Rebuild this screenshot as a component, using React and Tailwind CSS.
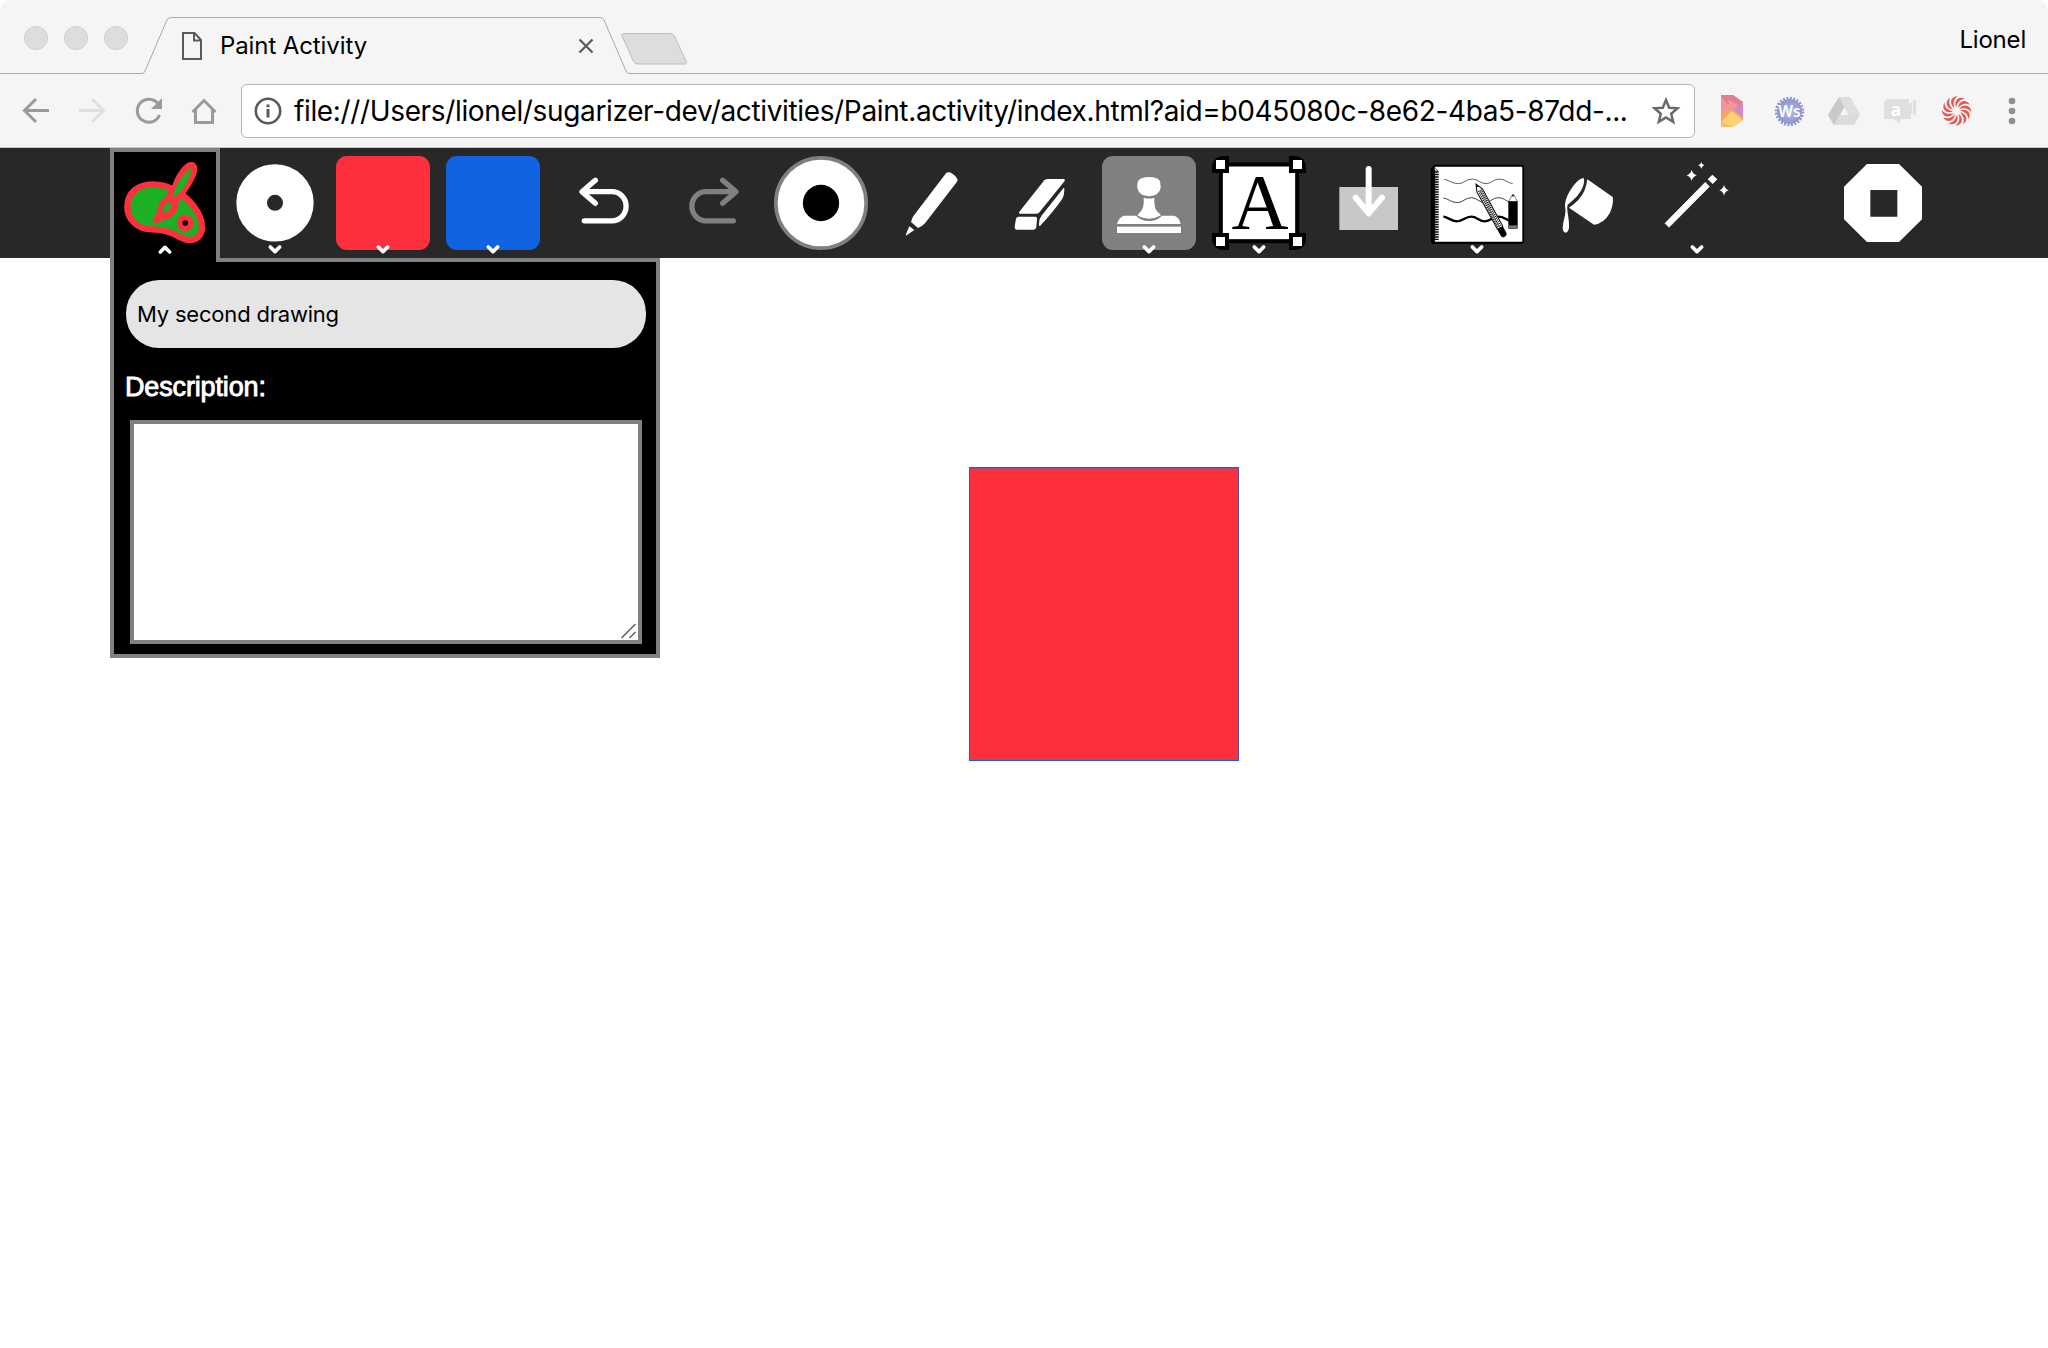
const Caret = ({ cx, up = false }) => (
  <path
    d={up ? `M${cx - 14} 336 L${cx} 322 L${cx + 14} 336` : `M${cx - 14} 321 L${cx} 335 L${cx + 14} 321`}
    fill="none"
    stroke="#fff"
    strokeWidth="11"
    strokeLinecap="round"
    strokeLinejoin="round"
  />
);

/* Tool icons share a 282-unit square; the x origin differs per tool. */
const Tool = ({ x, label, className = "mt-2", children }) => (
  <button type="button" aria-label={label} className={`size-[94px] shrink-0 ${className}`}>
    <svg viewBox={`${x} 48 282 282`} className="block size-full overflow-visible">
      {children}
    </svg>
  </button>
);

const Paint = () => (
  <>
    <path
      d="M82 200 C82 158 116 133 156 133 C184 133 206 140 224 150 C262 170 306 216 306 262 C306 286 290 300 268 300 C240 300 222 268 155 268 C112 268 82 238 82 200 Z"
      fill="#1cb024"
      stroke="#fd313d"
      strokeWidth="19"
    />
    <path
      d="M216 138 C226 108 246 78 262 69 C276 61 292 68 292 86 C292 108 272 138 257 160 L243 178 L236 186 C236 206 228 220 216 230 C202 240 184 240 172 249 C160 252 155 243 160 236 C174 220 170 200 182 184 C190 176 198 174 203 160 Z"
      fill="#fd313d"
    />
    <path d="M219 174 C216 152 248 102 274 83 C276 106 252 148 234 162 Z" fill="#1cb024" />
    <path d="M214 191 C215 206 206 216 186 219 C190 204 194 190 204 187 Z" fill="#1cb024" />
    <circle cx="256" cy="249" r="17" fill="#000" stroke="#fd313d" strokeWidth="17" />
  </>
);

const WAVE = "C112 118 126 131 145 131 C162 131 168 117 187 117 C204 117 210 131 228 131 C245 131 250 117 268 117 C284 117 292 128 308 131";

const Notebook = () => (
  <>
    <path d="M70 78 L62 86 V302 Q62 312 74 312 L336 311" fill="#000" />
    <rect x="71" y="77" width="269" height="231" rx="6" fill="#fff" stroke="#000" strokeWidth="6" />
    <path d="M80 92 V302" stroke="#000" strokeWidth="12" strokeDasharray="3 2" />
    <path d="M74 90 V302" stroke="#000" strokeWidth="3" />
    <path d="M72 82 L84 93" stroke="#000" strokeWidth="2" />
    <path d={`M103 118 ${WAVE}`} fill="none" stroke="#111" strokeWidth="2" />
    <path d="M100 174 C112 174 123 188 142 188 C159 188 165 173 184 173 C201 173 207 188 225 188 C242 188 247 173 265 173 C280 173 288 182 297 186" fill="none" stroke="#111" strokeWidth="2.4" />
    <path d="M100 230 C112 230 123 244 142 244 C159 244 165 230 184 230 C201 230 207 244 225 244 C242 244 247 230 265 230 C280 230 288 238 297 241" fill="none" stroke="#000" strokeWidth="7" />
    <g transform="translate(198 132) rotate(-28.5)">
      <path d="M0 0 L-9 22 L-8 150 H10 L10 22 Z" fill="#fff" stroke="#000" strokeWidth="3" />
      <path d="M0 0 L-4 10 H4 Z" fill="#000" />
      <path d="M-4 22 V148 M5 22 V148" stroke="#000" strokeWidth="5" strokeDasharray="3 3" />
      <path d="M0.5 22 V148" stroke="#000" strokeWidth="2" />
      <path d="M-9 150 H10 V172 Q10 180 0 180 Q-9 180 -9 172 Z" fill="#000" />
    </g>
    <path d="M296 185 L305 167 H313 L322 185 Z" fill="#fff" stroke="#000" strokeWidth="1.5" />
    <path d="M305 169 L309 161 L313 169 Z" fill="#000" />
    <rect x="295" y="184" width="28" height="72" fill="#000" />
    <rect x="296" y="257" width="26" height="8" fill="#777" stroke="#222" strokeWidth="2" />
  </>
);

const Sparkle = ({ x, y, r }) => (
  <path
    transform={`translate(${x} ${y}) scale(${r})`}
    d="M0 -1 Q.15 -.25 .9 0 Q.15 .25 0 1 Q-.15 .25 -.9 0 Q-.15 -.25 0 -1 Z"
    fill="#fff"
  />
);

const TabStrip = () => (
  <div className="flex h-[74px] items-start justify-between border-b border-[#a9a9a9]">
    <div className="flex items-start">
      <div className="flex w-[144px] gap-4 pl-6 pt-[26px]">
        {[0, 1, 2].map((i) => (
          <span key={i} className="size-6 shrink-0 rounded-full border border-[#cfcfcf] bg-[#dddddd]" />
        ))}
      </div>
      <div className="relative flex h-[74px] w-[484px] items-center pl-[38px] pr-[34px] pt-[17px]">
        <svg viewBox="0 0 488 58" className="absolute -left-0.5 top-4 h-[58px] w-[488px]">
          <path d="M0 57.5 Q2 57.5 3 55 L25 4 Q26.500 1.500 29 1.500 H458 Q460.500 1.500 462 4 L484 55 Q485 57.500 488 57.500 V58 H0 Z" fill="#f5f5f5" />
          <path d="M0 57.5 Q2 57.5 3 55 L25 4 Q26.500 1.500 29 1.500 H458 Q460.500 1.500 462 4 L484 55 Q485 57.500 488 57.500" fill="none" stroke="#a9a9a9" />
        </svg>
        <svg viewBox="0 0 20 28" className="relative h-7 w-5 shrink-0" fill="none" stroke="#5a5a5a" strokeWidth="2">
          <path d="M1 1 H12.500 L19 8 V27 H1 Z M12 1 V8.500 H19" />
        </svg>
        <span className="relative ml-[18px] whitespace-nowrap text-[24px] leading-7 tracking-[-0.1px]">Paint Activity</span>
        <svg viewBox="0 0 16 16" className="relative ml-auto size-4" stroke="#5a5a5a" strokeWidth="2.200">
          <path d="M1.500 1.500 L14.500 14.500 M14.500 1.500 L1.500 14.500" />
        </svg>
      </div>
      <svg viewBox="0 0 68 34" className="-ml-2 mt-8 h-[34px] w-[68px]">
        <path d="M4 1.500 H50 Q53 1.500 54.500 4 L66 29 Q67.500 32 64 32 H18 Q14.500 32 13.500 29.500 L2.500 5 Q1 1.500 4 1.500 Z" fill="#dddddd" stroke="#bdbdbd" />
      </svg>
    </div>
    <span className="mr-[22px] mt-[26px] text-[24px] leading-7 tracking-[-0.2px]">Lionel</span>
  </div>
);

const AddressBar = () => (
  <div className="flex h-[73px] items-center">
    <svg viewBox="16 92 208 36" className="ml-4 h-9 w-[208px] shrink-0" fill="none" stroke="#9a9a9a" strokeWidth="3">
      <path d="M36 98 L24.500 109.500 L36 121 M25 109.500 H49" />
      <path d="M92 98 L103.500 109.500 L92 121 M79 109.500 H103" stroke="#dfdfdf" />
      <path d="M158.500 103.500 A11.500 11.500 0 1 0 159.500 114" />
      <path d="M162 97 V108 H151 Z" fill="#9a9a9a" stroke="none" />
      <path d="M192.500 111 L204 99.500 L215.500 111 M195.500 109 V121.500 H212.500 V109" />
    </svg>
    <div className="ml-[17px] flex h-[54px] w-[1454px] shrink-0 items-center rounded-md border border-[#b6b6b6] bg-white pl-3 pr-[13px]">
      <svg viewBox="0 0 28 28" className="size-7 shrink-0" fill="none" stroke="#5a5a5a">
        <circle cx="14" cy="14" r="12.200" strokeWidth="2.600" />
        <path d="M14 12 V20.500 M14 7.500 V10.300" strokeWidth="3" />
      </svg>
      <span className="ml-3 whitespace-nowrap text-[28px] leading-9 tracking-[-0.355px]">
        file:///Users/lionel/sugarizer-dev/activities/Paint.activity/index.html?aid=b045080c-8e62-4ba5-87dd-...
      </span>
      <svg viewBox="0 0 30 30" className="ml-auto size-[30px] shrink-0" fill="none" stroke="#6a6a6a" strokeWidth="2.500">
        <path d="M15 4 L18.200 11.700 L26.500 12.300 L20.200 17.700 L22.200 25.800 L15 21.400 L7.800 25.800 L9.800 17.700 L3.500 12.300 L11.800 11.700 Z" />
      </svg>
    </div>
    <svg viewBox="1712 92 312 36" className="ml-[17px] h-9 w-[312px] shrink-0">
      <path d="M1721 94 H1733 L1743 101 V119 L1733 126 H1721 Z" fill="#f0a079" />
      <path d="M1721 94 H1733 L1743 101 L1738 106 L1732 102 L1721 106 Z" fill="#e27f8e" />
      <path d="M1721 96 L1733 109 L1721 111 Z M1727 98 L1733 109 L1738 104 Z" fill="#ef96a0" />
      <path d="M1743 101 V116 L1733 109 Z" fill="#ce8dc9" />
      <path d="M1721 110 L1733 109 L1721 121 Z" fill="#fba366" />
      <path d="M1721 121 L1732 110 L1743 119 L1733 126 H1721 Z" fill="#fdd270" />
      <path d="M1721 121 L1733 126 H1721 Z" fill="#f9bc6d" />
      <defs>
        <radialGradient id="seal">
          <stop offset="0" stopColor="#b9bde6" />
          <stop offset="1" stopColor="#8d93d0" />
        </radialGradient>
      </defs>
      <circle cx="1789.500" cy="110.500" r="13.200" fill="none" stroke="#8f94d2" strokeWidth="3" strokeDasharray="1.900 1.556" />
      <circle cx="1789.500" cy="110.500" r="12.500" fill="url(#seal)" />
      <text x="1789.500" y="116" textAnchor="middle" fontSize="15.500" fontWeight="600" fill="#fff" fontFamily="Noto Sans, sans-serif">Ws</text>
      <path d="M1839 96 H1850 L1860 114 H1849 L1844.500 105 L1840 113 L1834 124 L1828 114 Z" fill="#d4d4d4" />
      <path d="M1839 96 L1844.500 106 L1834 124 L1828 114 Z" fill="#c9c9c9" />
      <path d="M1840 114 H1860 L1854 124 H1834 Z" fill="#dcdcdc" />
      <path d="M1850 96 L1860 114 H1849 L1844.500 106 L1839 96 Z" fill="#dedede" />
      <path d="M1887 98 H1909 V103 L1916 98 V115 L1911 113 V118 H1900 V123 L1894 118 H1884 V101 Z" fill="#dfdfdf" />
      <path d="M1912 100 L1913 115" stroke="#f5f5f5" />
      <text x="1896" y="114.500" textAnchor="middle" fontSize="17" fontWeight="700" fill="#fff" fontFamily="Open Sans, sans-serif">a</text>
      <g transform="translate(1956.500 110)" fill="#e05d55">
        {Array.from({ length: 12 }, (_, i) => (
          <path key={i} transform={`rotate(${i * 30})`} d="M-0.500 -3.500 C-3 -10 2 -15.800 8.500 -12 C4.500 -12 1 -9.500 -0.500 -3.500 Z" />
        ))}
      </g>
      <g fill="#8f8f8f">
        <circle cx="2012" cy="100" r="3.300" />
        <circle cx="2012" cy="110" r="3.300" />
        <circle cx="2012" cy="120" r="3.300" />
      </g>
    </svg>
  </div>
);

const Toolbar = () => (
  <div className="relative flex h-[110px] bg-[#282828] pl-[110px]">
    <div className="relative z-10 h-[114px] w-[110px] shrink-0 border-x-4 border-t-4 border-[#808080] bg-black">
      <Tool x={54} label="Activity" className="ml-1 mt-1">
        <Paint />
        <Caret cx={195} up />
      </Tool>
    </div>
    <Tool x={384} label="Network" className="ml-2 mt-2">
      <circle cx="525" cy="188.500" r="70" fill="none" stroke="#fff" strokeWidth="92" />
      <Caret cx={525} />
    </Tool>
    <Tool x={708} label="Stroke color" className="ml-3.5 mt-2 rounded-[11px] bg-[#fd313d]">
      <Caret cx={849} />
    </Tool>
    <Tool x={48} label="Fill color" className="ml-4 mt-2 rounded-[11px] bg-[#1163e2]">
      <Caret cx={189} />
    </Tool>
    <Tool x={378} label="Undo" className="ml-4 mt-2">
      <path d="M496 121 L456 155 L496 190 M458 155 H546 A42 43.500 0 0 1 546 242.500 H463" fill="none" stroke="#fff" strokeWidth="16" strokeLinecap="round" strokeLinejoin="round" />
    </Tool>
    <Tool x={708} label="Redo" className="ml-4 mt-2">
      <path d="M878 121 L918 155 L878 190 M916 155 H828 A42 43.500 0 0 0 828 242.500 H910" fill="none" stroke="#808080" strokeWidth="16" strokeLinecap="round" strokeLinejoin="round" />
    </Tool>
    <Tool x={42} label="Brush size" className="ml-3.5 mt-2">
      <circle cx="183" cy="189" r="135.500" fill="#fff" stroke="#808080" strokeWidth="11" />
      <circle cx="183" cy="189" r="54.500" fill="#000" />
    </Tool>
    <Tool x={372} label="Pen" className="ml-4 mt-2">
      <path d="M558 100 Q563 95 569 97 Q584 103 592 117 Q594 121 591 125 L495 250 Q486 260 474 264 L453 246 Q455 235 462 226 Z" fill="#fff" />
      <path d="M448 259 L463 270 L440 286 Q436 287 438 283 Z" fill="#fff" />
    </Tool>
    <Tool x={702} label="Eraser" className="ml-4 mt-2">
      <path d="M853 121 Q858 117 864 117 H912 Q916 118 914 123 L837 218 Q834 221 829 221 H779 Q775 220 778 215 Z" fill="#fff" />
      <path d="M768 236 Q770 230 777 230 H826 Q832 230 831 237 L829 260 Q828 269 819 269 H770 Q763 268 764 260 Z" fill="#fff" />
      <path d="M910 145 Q914 142 913 150 Q913 165 907 176 Q880 215 840 258 Q836 259 837 253 Q837 237 844 228 Z" fill="#fff" />
    </Tool>
    <Tool x={36} label="Stamp" className="ml-3.5 mt-2 rounded-[11px] bg-[#808080]">
      <path d="M145 122 Q153 111 177 111 Q202 111 209 122 Q212 128 212 142 Q210 158 196 165 Q177 172 158 165 Q144 158 142 142 Q141 130 145 122 Z" fill="#fff" />
      <path d="M161 173 Q177 178 193 173 Q192 204 200 212 L213 226 Q196 236 177 236 Q158 236 142 226 L154 212 Q163 200 161 173 Z" fill="#fff" />
      <path d="M102 227 H138 Q154 243 177 243 Q201 243 216 227 H252 Q268 231 272 252 H81 Q87 231 102 227 Z" fill="#fff" />
      <rect x="81" y="260" width="192" height="19" fill="#fff" />
      <Caret cx={177} />
    </Tool>
    <Tool x={366} label="Text" className="ml-4 mt-2">
      <defs>
        <clipPath id="text-frame">
          <rect x="366" y="48" width="282" height="282" rx="34" />
        </clipPath>
      </defs>
      <g clipPath="url(#text-frame)">
        <rect x="392.500" y="73.500" width="229" height="230" fill="#fff" stroke="#000" strokeWidth="12" />
        {[
          [366, 48, 378, 60],
          [597, 48, 609, 60],
          [366, 279, 378, 291],
          [597, 279, 609, 291],
        ].map(([x, y, ix, iy]) => (
          <g key={`${x}-${y}`}>
            <rect x={x} y={y} width="51" height="51" fill="#000" />
            <rect x={ix} y={iy} width="27" height="27" fill="#fff" />
          </g>
        ))}
      </g>
      <text x="510" y="263" textAnchor="middle" fontFamily="Liberation Serif, serif" fontSize="237" fill="#000">A</text>
      <Caret cx={507} />
    </Tool>
    <Tool x={696} label="Insert image" className="ml-4 mt-2">
      <rect x="748" y="141" width="176" height="129" fill="#c7c8ca" />
      <path d="M836 87 V220 M797 173 L836 220 L876 173" fill="none" stroke="#fff" strokeWidth="18" strokeLinecap="round" strokeLinejoin="round" />
    </Tool>
    <Tool x={60} label="Background" className="ml-3.5 mt-2">
      <Notebook />
      <Caret cx={201} />
    </Tool>
    <Tool x={390} label="Fill" className="ml-4 mt-2">
      <path d="M520 113 Q526 120 518 142 Q509 167 473 194 Q470 203 473 220 Q478 248 477 264 Q474 278 467 278 Q459 277 458 264 Q459 248 465 226 Q468 212 465 199 Q464 180 479 154 Q498 120 520 113 Z" fill="#fff" />
      <path d="M532 118 L608 171 Q612 190 600 218 Q582 250 552 254 L477 203 Q511 180 523 153 Q530 136 532 118 Z" fill="#fff" />
    </Tool>
    <Tool x={720} label="Effects" className="ml-4 mt-2">
      <path d="M886 127 L898 140 L777 262 L765 250 Z" fill="#fff" stroke="#fff" strokeWidth="2" />
      <path d="M907 104 L922 118 L908 132 L893 118 Z" fill="#fff" />
      <Sparkle x={845} y={106} r={17} />
      <Sparkle x={874} y={76} r={10} />
      <Sparkle x={942} y={151} r={16} />
      <Caret cx={861} />
    </Tool>
    <Tool x={288} label="Stop" className="ml-[92px] mt-2">
      <path fillRule="evenodd" d="M381 72 H477 L546 140 V238 L477 306 H381 L312 238 V140 Z M391 150 V230 H472 V150 Z" fill="#fff" />
    </Tool>
    <section className="absolute left-[110px] top-[110px] flex h-[400px] w-[550px] flex-col border-4 border-[#808080] bg-black px-3 pt-[18px]">
      <div className="flex h-[68px] w-[520px] items-center rounded-[33px] bg-[#e5e5e5] pl-[11px] text-[22px]">
        <span className="whitespace-nowrap tracking-[-0.2px]">My second drawing</span>
      </div>
      <h2 className="-ml-px mt-[22px] font-['Liberation_Sans',sans-serif] text-[27px] leading-[34px] tracking-[-0.15px] text-white [-webkit-text-stroke:0.9px_white]">Description:</h2>
      <div className="ml-1 mt-4 flex h-[224px] w-[512px] items-end justify-end border-4 border-[#808080] bg-white">
        <svg viewBox="0 0 18 18" className="size-[18px]" stroke="#555" strokeWidth="1.300">
          <path d="M1.500 16 L15.500 2 M9.500 16 L15.500 10" />
        </svg>
      </div>
    </section>
  </div>
);

export default function App() {
  return (
    <div className="flex h-[1348px] w-[2048px] flex-col overflow-hidden bg-white font-['Inter','Noto_Sans',sans-serif] text-black">
      <header className="h-[148px] shrink-0 rounded-t-[10px] border-b border-[#c6c6c6] bg-[#f5f5f5]">
        <TabStrip />
        <AddressBar />
      </header>
      <Toolbar />
      <main className="relative grow">
        <div className="absolute left-[969px] top-[209px] h-[294px] w-[270px] border border-y-[#1163e2] border-x-[#5b4fa8] bg-[#fd313d] shadow-[inset_0_1px_0_#9c4578]" />
      </main>
    </div>
  );
}
